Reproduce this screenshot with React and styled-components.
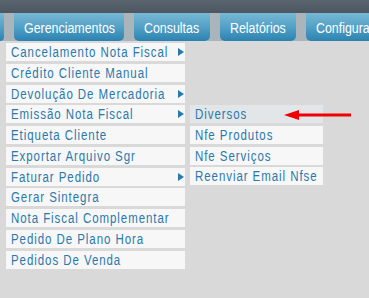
import React from "react";
import styled, { createGlobalStyle } from "styled-components";

const GlobalStyle = createGlobalStyle`
  html, body {
    margin: 0;
    padding: 0;
    background: #d9d9d9;
    font-family: "Liberation Sans", Arial, sans-serif;
  }
`;

const menuItems = [
  { label: "Cancelamento Nota Fiscal", sub: true },
  { label: "Crédito Cliente Manual" },
  { label: "Devolução De Mercadoria", sub: true },
  { label: "Emissão Nota Fiscal", sub: true },
  { label: "Etiqueta Cliente" },
  { label: "Exportar Arquivo Sgr" },
  { label: "Faturar Pedido", sub: true },
  { label: "Gerar Sintegra" },
  { label: "Nota Fiscal Complementar" },
  { label: "Pedido De Plano Hora" },
  { label: "Pedidos De Venda" },
];

const subItems = ["Diversos", "Nfe Produtos", "Nfe Serviços", "Reenviar Email Nfse"];

// widths read off the screenshot; the last tab runs off the edge
const tabs = [
  { label: "", width: 4 },
  { label: "Gerenciamentos", width: 110 },
  { label: "Consultas", width: 76 },
  { label: "Relatórios", width: 76 },
  { label: "Configurações", width: 110 },
];

const App = () => {
  return (
    <>
      <GlobalStyle />
      <Page>
        <TopBar />
        <TabStrip>
          {tabs.map((t, i) => (
            <Tab key={i} $w={t.width}>
              {t.label && <TabLabel>{t.label}</TabLabel>}
            </Tab>
          ))}
        </TabStrip>
        <MenuArea>
          <Menu>
            {menuItems.map((m) => (
              <Item key={m.label}>
                <Label>{m.label}</Label>
                {m.sub && <Caret />}
              </Item>
            ))}
          </Menu>
          <SubMenu>
            {subItems.map((s, i) => (
              <Item key={s} $active={i === 0}>
                <Label>{s}</Label>
                {i === 0 && (
                  <Pointer width="70" height="12" viewBox="0 0 70 12">
                    <path d="M0 6 L15 1 L15 4.6 L67 4.6 L67 7.4 L15 7.4 L15 11 Z" fill="#f00000" />
                  </Pointer>
                )}
              </Item>
            ))}
          </SubMenu>
        </MenuArea>
      </Page>
    </>
  );
};

export default App;

const Page = styled.div`
  width: 369px;
  height: 298px;
  overflow: hidden;
  background: #d9d9d9;
`;

const TopBar = styled.div`
  height: 13px;
  background: linear-gradient(#5a646e, #4d5761);
`;

const TabStrip = styled.div`
  display: flex;
  gap: 10px;
  height: 28px;
  background: #a9b5bb;
  overflow: hidden;
  white-space: nowrap;
`;

const Tab = styled.div`
  flex: none;
  display: flex;
  align-items: center;
  width: ${({ $w }) => $w}px;
  padding: 1px 0 0 10px;
  box-sizing: border-box;
  border-radius: 0 0 5px 5px;
  background: linear-gradient(#78b8d5 0%, #4f9ec5 55%, #2b82b0 100%);
  color: #ffffff;
  font-size: 15.5px;

  &:empty {
    padding: 0;
    border-radius: 0 0 4px 0;
  }
`;

const TabLabel = styled.span`
  display: inline-block;
  transform: scaleX(0.8);
  transform-origin: left center;
`;

const MenuArea = styled.div`
  display: flex;
  align-items: flex-start;
  gap: 5px;
  padding: 2px 0 0 6px;
`;

const Menu = styled.div`
  display: flex;
  flex-direction: column;
  gap: 2.75px;
  width: 179px;
`;

const SubMenu = styled(Menu)`
  width: 133px;
  margin-top: 62px;
`;

const Item = styled.div`
  position: relative;
  display: flex;
  align-items: center;
  height: 18px;
  padding: 0 1px 0 5px;
  background: ${({ $active }) => ($active ? "#e2e6e9" : "#f7f7f7")};
  color: #2a79ac;
  font-size: 14px;
  letter-spacing: 1.15px;
  white-space: nowrap;
`;

const Label = styled.span`
  flex: 1 1 auto;
  min-width: 0;
  display: inline-block;
  transform: scaleX(0.82);
  transform-origin: left center;
`;

const Caret = styled.i`
  flex: none;
  width: 0;
  height: 0;
  margin-left: auto;
  border-top: 4px solid transparent;
  border-bottom: 4px solid transparent;
  border-left: 6px solid #2a79ac;
`;

const Pointer = styled.svg`
  position: absolute;
  left: 94px;
  top: 4px;
`;
